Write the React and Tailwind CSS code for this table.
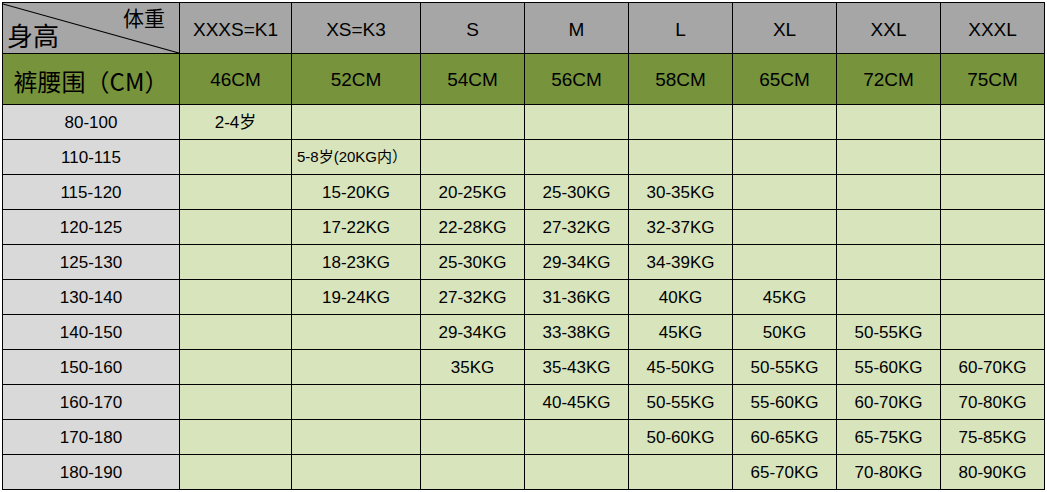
import React from "react";

const sizes = ["XXXS=K1", "XS=K3", "S", "M", "L", "XL", "XXL", "XXXL"];
const waists = ["46CM", "52CM", "54CM", "56CM", "58CM", "65CM", "72CM", "75CM"];

// height range -> weight per size column
const rows = [
    ["80-100", ["2-4岁", "", "", "", "", "", "", ""]],
    ["110-115", ["", "5-8岁(20KG内）", "", "", "", "", "", ""]],
    ["115-120", ["", "15-20KG", "20-25KG", "25-30KG", "30-35KG", "", "", ""]],
    ["120-125", ["", "17-22KG", "22-28KG", "27-32KG", "32-37KG", "", "", ""]],
    ["125-130", ["", "18-23KG", "25-30KG", "29-34KG", "34-39KG", "", "", ""]],
    ["130-140", ["", "19-24KG", "27-32KG", "31-36KG", "40KG", "45KG", "", ""]],
    ["140-150", ["", "", "29-34KG", "33-38KG", "45KG", "50KG", "50-55KG", ""]],
    ["150-160", ["", "", "35KG", "35-43KG", "45-50KG", "50-55KG", "55-60KG", "60-70KG"]],
    ["160-170", ["", "", "", "40-45KG", "50-55KG", "55-60KG", "60-70KG", "70-80KG"]],
    ["170-180", ["", "", "", "", "50-60KG", "60-65KG", "65-75KG", "75-85KG"]],
    ["180-190", ["", "", "", "", "", "65-70KG", "70-80KG", "80-90KG"]],
];

const SizeChart = () => {
    return (
        <div className="min-h-screen bg-white pl-[2px] pt-[2px] text-black font-['Liberation_Sans','Noto_Sans_CJK_SC',sans-serif]">
            <div className="grid w-max grid-cols-[176px_111px_128px_repeat(6,103px)] grid-rows-[50px_50px_repeat(11,34px)] gap-px bg-black p-px">
                {/* corner cell with diagonal */}
                <div className="relative bg-[#a6a6a6] font-['Noto_Sans_CJK_SC',sans-serif]">
                    <svg className="absolute inset-0" width="176" height="50" viewBox="0 0 176 50">
                        <line x1="0" y1="1" x2="176" y2="50" stroke="#000" strokeWidth="1.2" />
                    </svg>
                    <span className="absolute right-[14px] top-[4px] text-[21px] leading-none">体重</span>
                    <span className="absolute bottom-[5px] left-[4px] text-[26px] leading-none">身高</span>
                </div>
                {sizes.map((s) => (
                    <div key={s} className="flex items-center justify-center bg-[#a6a6a6] pt-[5px] text-[19px]">
                        {s}
                    </div>
                ))}

                {/* waist row */}
                <div className="flex items-center justify-center bg-[#77933c] pt-[3px] font-['Noto_Sans_CJK_SC',sans-serif] text-[24px]">
                    裤腰围（CM）
                </div>
                {waists.map((w) => (
                    <div key={w} className="flex items-center justify-center bg-[#77933c] pt-[2px] text-[19px]">
                        {w}
                    </div>
                ))}

                {rows.map(([h, cells]) => (
                    <React.Fragment key={h}>
                        <div className="flex items-center justify-center bg-[#d9d9d9] pt-px text-[17px]">{h}</div>
                        {cells.map((c, i) =>
                            c.startsWith("5-8") ? (
                                <div key={i} className="flex items-center bg-[#d8e4bc] pl-[5px] pt-px text-[15px]">
                                    {c}
                                </div>
                            ) : (
                                <div key={i} className="flex items-center justify-center bg-[#d8e4bc] pt-px text-[17px]">
                                    {c}
                                </div>
                            )
                        )}
                    </React.Fragment>
                ))}
            </div>
        </div>
    );
};

export default SizeChart;
